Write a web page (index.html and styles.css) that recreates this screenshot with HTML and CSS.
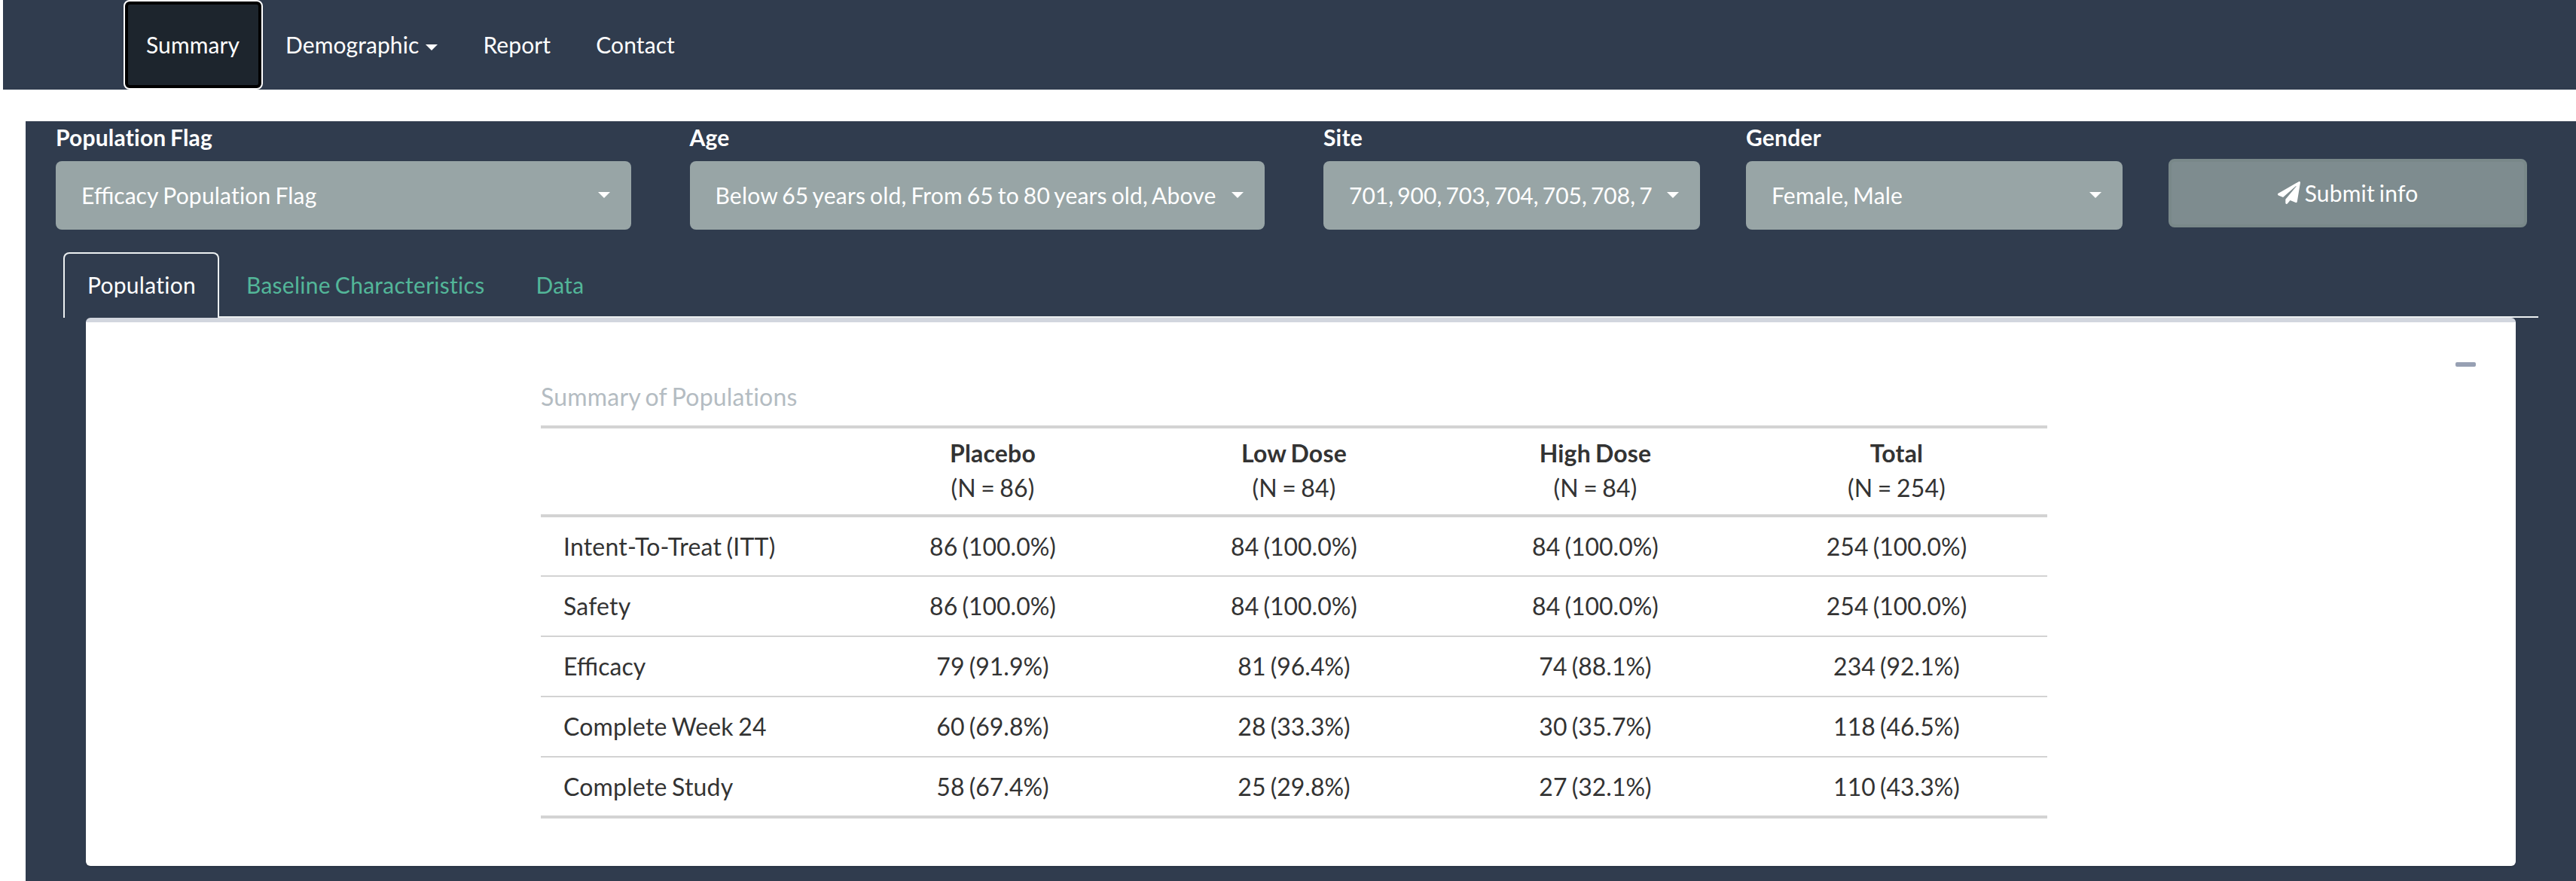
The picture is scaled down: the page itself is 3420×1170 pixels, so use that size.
FILE: index.html
```html
<!DOCTYPE html>
<html lang="en">
<head>
<meta charset="utf-8">
<title>Summary</title>
<link rel="stylesheet" href="styles.css">
</head>
<body>
<nav class="navbar">
  <a class="nav-link active">Summary</a>
  <a class="nav-link">Demographic<span class="caret nav-caret"></span></a>
  <a class="nav-link">Report</a>
  <a class="nav-link">Contact</a>
</nav>
<main class="content">
  <form class="filters">
    <div class="field wide"><label>Population Flag</label><div class="select"><span class="value"><span class="liga">Efficacy</span> Population Flag</span><span class="caret"></span></div></div>
    <div class="field wide"><label>Age</label><div class="select"><span class="value">Below 65 years old, From 65 to 80 years old, Above</span><span class="caret"></span></div></div>
    <div class="field"><label>Site</label><div class="select"><span class="value numeric">701, 900, 703, 704, 705, 708, 7</span><span class="caret"></span></div></div>
    <div class="field"><label>Gender</label><div class="select"><span class="value">Female, Male</span><span class="caret"></span></div></div>
    <button class="submit" type="button"><svg class="plane" viewBox="0 0 512 512"><path fill="currentColor" d="M476 3.2L12.5 270.6c-18.1 10.4-15.8 35.600 2.200 43.200L121 358.400l287.300-253.200c5.500-4.900 13.300 2.600 8.600 8.300L176 407v80.500c0 23.600 28.500 32.900 42.500 15.800L282 426l124.600 52.200c14.200 6 30.400-2.900 33-18.200l72-432C515 7.800 493.300-6.800 476 3.200z"/></svg><span>Submit info</span></button>
  </form>
  <div class="tabs">
    <a class="tab selected">Population</a>
    <a class="tab">Baseline Characteristics</a>
    <a class="tab">Data</a>
  </div>
  <section class="box">
    <div class="box-tools"><span class="collapse"></span></div>
    <table class="summary">
      <caption>Summary of Populations</caption>
      <thead>
        <tr><th></th><th>Placebo<span>(N = 86)</span></th><th>Low Dose<span>(N = 84)</span></th><th>High Dose<span>(N = 84)</span></th><th>Total<span>(N = 254)</span></th></tr>
      </thead>
      <tbody>
        <tr><td>Intent-To-Treat (ITT)</td><td>86 (100.0%)</td><td>84 (100.0%)</td><td>84 (100.0%)</td><td>254 (100.0%)</td></tr>
        <tr><td>Safety</td><td>86 (100.0%)</td><td>84 (100.0%)</td><td>84 (100.0%)</td><td>254 (100.0%)</td></tr>
        <tr><td><span class="liga">Efficacy</span></td><td>79 (91.9%)</td><td>81 (96.4%)</td><td>74 (88.1%)</td><td>234 (92.1%)</td></tr>
        <tr><td>Complete Week 24</td><td>60 (69.8%)</td><td>28 (33.3%)</td><td>30 (35.7%)</td><td>118 (46.5%)</td></tr>
        <tr><td>Complete Study</td><td>58 (67.4%)</td><td>25 (29.8%)</td><td>27 (32.1%)</td><td>110 (43.3%)</td></tr>
      </tbody>
    </table>
  </section>
</main>
</body>
</html>
```
FILE: styles.css
```css
* { box-sizing: border-box; }
body {
  margin: 0;
  height: 1170px;
  overflow: hidden;
  background: #fff;
  font-family: Lato, sans-serif;
  font-size: 30px;
  line-height: 42px;
  letter-spacing: 0.2px;
  word-spacing: -2px;
  font-variant-ligatures: none;
  color: #fff;
}
.liga {
  letter-spacing: 0;
  font-variant-ligatures: common-ligatures;
}
.navbar {
  display: flex;
  height: 119px;
  margin-left: 4px;
  padding-left: 160px;
  background: #303c4e;
}
.nav-link {
  display: flex;
  align-items: center;
  padding: 0 30px 1px;
  letter-spacing: 0.1px;
}
.nav-link.active {
  width: 185px;
  background: #1d252d;
  border: 2px solid #fff;
  border-radius: 8px;
  box-shadow: inset 0 0 0 4px #000;
  padding: 0 28px 1px;
}
.caret {
  flex: none;
  width: 0;
  height: 0;
  border: 8px solid transparent;
  border-top-color: #fff;
  border-bottom: 0;
}
.nav-caret { margin: 8px 0 0 9px; }
.content {
  margin: 42px 0 0 34px;
  height: 1009px;
  padding: 0 50px 0 40px;
  background: #303c4e;
}
.filters {
  display: flex;
  height: 174px;
}
.field {
  flex: none;
  width: 500px;
  margin-right: 61px;
}
.field.wide {
  width: 763.5px;
  margin-right: 78px;
}
.field label {
  display: block;
  height: 53px;
  font-weight: 700;
}
.select {
  display: flex;
  align-items: center;
  justify-content: space-between;
  height: 91px;
  padding: 0 28px 2px 34px;
  border-radius: 8px;
  background: #98a5a6;
}
.value { white-space: nowrap; }
.value.numeric {
  letter-spacing: 0;
  word-spacing: -2.5px;
}
.submit {
  display: flex;
  flex: none;
  align-items: center;
  justify-content: center;
  gap: 6px;
  width: 476px;
  height: 91px;
  margin: 50px 0 0;
  padding: 0 0 2px;
  border: 4px solid #798889;
  border-radius: 8px;
  background: #7e8c8f;
  color: #fff;
  font: inherit;
  letter-spacing: inherit;
  word-spacing: inherit;
}
.plane { width: 30px; height: 30px; }
.tabs {
  display: flex;
  height: 87px;
  margin-left: 10px;
  width: 3286px;
  border-bottom: 2px solid #ecf0f1;
}
.tab {
  height: 87px;
  margin-right: 4px;
  padding: 22px 32px 0;
  letter-spacing: 0.27px;
  color: #53b699;
}
.tab.selected {
  width: 207px;
  padding: 20px 30px 0;
  border: 2px solid #ecf0f1;
  border-bottom: 0;
  border-radius: 8px 8px 0 0;
  background: #303c4e;
  color: #fff;
}
.box {
  position: relative;
  width: 3226px;
  height: 728px;
  margin-left: 40px;
  padding: 76px 0 0 604px;
  border-top: 6px solid #d2d6de;
  border-radius: 6px;
  background: #fff;
  box-shadow: 0 2px 2px rgba(0, 0, 0, 0.1);
}
.box-tools {
  position: absolute;
  top: 53px;
  right: 53px;
}
.collapse {
  display: block;
  width: 27px;
  height: 6px;
  border-radius: 2px;
  background: #97a0b3;
}
.summary {
  width: 2000px;
  table-layout: fixed;
  border-collapse: separate;
  border-spacing: 0;
  font-size: 32px;
  line-height: 46px;
  color: #333;
  text-align: center;
}
.summary caption {
  height: 61px;
  line-height: 46px;
  text-align: left;
  color: #b4bcc2;
}
.summary th {
  height: 122px;
  padding: 0 0 2px;
  border-top: 4px solid #d3d3d3;
  border-bottom: 4px solid #d3d3d3;
}
.summary th span { display: block; font-weight: 400; }
.summary td {
  height: 80px;
  padding: 0;
  border-bottom: 2px solid #d3d3d3;
  letter-spacing: 0;
}
.summary td:first-child {
  padding-left: 30px;
  text-align: left;
  letter-spacing: 0.2px;
}
.summary tbody tr:first-child td { height: 79px; }
.summary tbody tr:last-child td { height: 81px; border-bottom-width: 4px; }
```
